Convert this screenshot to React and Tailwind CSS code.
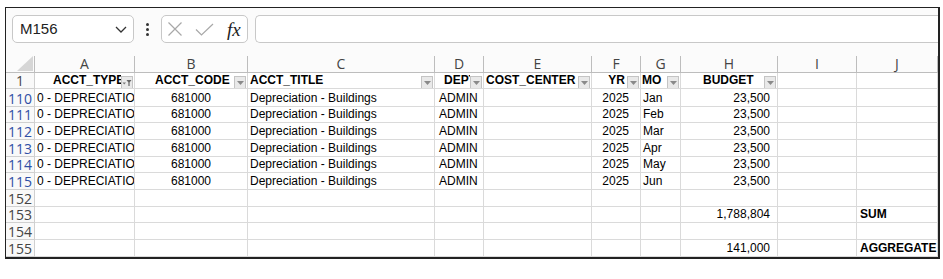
import clsx from "clsx";

const grid =
  "grid grid-cols-[29px_100px_113px_187px_49px_108px_49px_40px_97px_79px_81px]";

const months = ["Jan", "Feb", "Mar", "Apr", "May", "Jun"];

function Cell({ children, className }) {
  return (
    <div
      className={clsx(
        "border-r border-b border-[#dadada] overflow-hidden whitespace-nowrap flex items-end leading-[14px] pb-[1px]",
        className
      )}
    >
      {children}
    </div>
  );
}

function RowNum({ n, blue }) {
  return (
    <div
      className={clsx(
        "border-r border-b border-[#d0d0d0] bg-[#f9f9f9] flex items-end justify-center leading-[15px] text-[14px] font-['Open_Sans',sans-serif] overflow-hidden",
        blue ? "text-[#2f4fa5]" : "text-[#444]"
      )}
    >
      {n}
    </div>
  );
}

function FilterBtn({ funnel }) {
  return (
    <div className="w-[12px] h-[13px] shrink-0 self-start mt-[3px] bg-[#e9e9e9] border border-[#c4c4c4] flex items-center justify-center">
      {funnel ? (
        <svg width="10" height="8" viewBox="0 0 10 8">
          <path d="M0.5 3.5 L4 3.5 L2.25 5.5 Z" fill="#777" />
          <path d="M4.5 1 L9.5 1 L7.6 3.5 L7.6 7 L6.4 7 L6.4 3.5 Z" fill="#666" />
        </svg>
      ) : (
        <svg width="7" height="4" viewBox="0 0 7 4">
          <path d="M0 0 L7 0 L3.5 4 Z" fill="#8a8a8a" />
        </svg>
      )}
    </div>
  );
}

function HeadCell({ text, pad, right, funnel }) {
  return (
    <div className="border-r border-b border-[#dadada] flex items-stretch pr-[1px] overflow-hidden">
      <div
        className={clsx(
          "flex-1 min-w-0 overflow-hidden whitespace-nowrap flex items-end leading-[14px] pb-[1px] font-bold",
          right ? "justify-end pr-[2px]" : "",
          pad
        )}
      >
        {text}
      </div>
      <FilterBtn funnel={funnel} />
    </div>
  );
}

function DataRow({ n, month, h }) {
  return (
    <div className={clsx(grid, h)}>
      <RowNum n={n} blue />
      <Cell className="pl-[2px]">0 - DEPRECIATION</Cell>
      <Cell className="justify-center">681000</Cell>
      <Cell className="pl-[2px]">Depreciation - Buildings</Cell>
      <Cell className="pl-[4px]">ADMIN</Cell>
      <Cell />
      <Cell className="justify-end pr-[11px]">2025</Cell>
      <Cell className="pl-[2px]">{month}</Cell>
      <Cell className="justify-end pr-[7px]">23,500</Cell>
      <Cell />
      <Cell />
    </div>
  );
}

function EmptyRow({ n, h, amount, label }) {
  return (
    <div className={clsx(grid, h)}>
      <RowNum n={n} />
      <Cell />
      <Cell />
      <Cell />
      <Cell />
      <Cell />
      <Cell />
      <Cell />
      <Cell className="justify-end pr-[7px]">{amount}</Cell>
      <Cell />
      <Cell className="pl-[3px] font-bold">{label}</Cell>
    </div>
  );
}

export default function App() {
  const letters = ["A", "B", "C", "D", "E", "F", "G", "H", "I", "J"];
  const heights = ["h-[18px]", "h-[16px]", "h-[17px]", "h-[17px]", "h-[16px]", "h-[17px]"];

  return (
    <div className="w-[943px] h-[279px] bg-white pt-[7px] pl-[5px]">
      <div className="w-[935px] h-[252px] border-l border-t border-r-2 border-b-2 border-[#222] overflow-hidden flex flex-col bg-white">
        {/* formula bar */}
        <div className="h-[48px] shrink-0 flex items-start pt-[7px] pl-[6px] bg-[#fbfbfb]">
          <div className="w-[122px] h-[28px] rounded-[5px] border border-[#c8c8c8] bg-white flex items-center pl-[7px] pr-[6px] font-['Liberation_Sans',sans-serif] text-[15px] text-[#222]">
            <span className="flex-1">M156</span>
            <svg width="12" height="7" viewBox="0 0 12 7">
              <path d="M1 1 L6 6 L11 1" fill="none" stroke="#333" strokeWidth="1.3" />
            </svg>
          </div>
          <div className="w-[27px] h-[28px] flex flex-col items-center justify-center gap-[2px]">
            <div className="w-[3px] h-[3px] bg-[#333] rounded-full" />
            <div className="w-[3px] h-[3px] bg-[#333] rounded-full" />
            <div className="w-[3px] h-[3px] bg-[#333] rounded-full" />
          </div>
          <div className="w-[87px] h-[28px] rounded-[5px] border border-[#c8c8c8] bg-white flex items-center pl-[5px]">
            <svg width="16" height="16" viewBox="0 0 16 16">
              <path d="M1.5 1.5 L14.5 14.5 M14.5 1.5 L1.5 14.5" stroke="#a8a8a8" strokeWidth="1.2" />
            </svg>
            <svg width="19" height="13" viewBox="0 0 19 13" className="ml-[12px]">
              <path d="M1 6.5 L6.5 12 L18 1" fill="none" stroke="#a8a8a8" strokeWidth="1.2" />
            </svg>
            <span className="ml-[13px] font-['Liberation_Serif',serif] italic text-[19px] leading-none text-[#222]">
              fx
            </span>
          </div>
          <div className="flex-1 ml-[7px] h-[28px] rounded-l-[5px] border border-r-0 border-[#c8c8c8] bg-white" />
        </div>

        {/* column letters */}
        <div className={clsx(grid, "h-[17px] shrink-0 bg-[#fbfbfb] font-['Open_Sans',sans-serif] text-[14px] text-[#444]")}>
          <div className="border-r border-b border-[#bdbdbd] flex items-end justify-end pr-[1px] pb-[1px]">
            <svg width="16" height="15" viewBox="0 0 16 15">
              <path d="M16 0 L16 15 L0 15 Z" fill="#d6d6d6" />
            </svg>
          </div>
          {letters.map((l) => (
            <div key={l} className="border-r border-b border-[#bdbdbd] flex items-center justify-center leading-none">
              {l}
            </div>
          ))}
        </div>

        <div className="font-['Liberation_Sans',Arial,sans-serif] text-[12px] text-black">
          {/* table header */}
          <div className={clsx(grid, "h-[16px]")}>
            <RowNum n="1" />
            <HeadCell text="ACCT_TYPE" pad="pl-[18px]" funnel />
            <HeadCell text="ACCT_CODE" pad="pl-[20px]" />
            <HeadCell text="ACCT_TITLE" pad="pl-[2px]" />
            <HeadCell text="DEPT" pad="pl-[9px]" />
            <HeadCell text="COST_CENTER" pad="pl-[2px]" />
            <HeadCell text="YR" right />
            <HeadCell text="MO" pad="pl-[1px]" />
            <HeadCell text="BUDGET" pad="pl-[22px]" />
            <div className="border-r border-b border-[#dadada]" />
            <div className="border-r border-b border-[#dadada]" />
          </div>

          {months.map((m, i) => (
            <DataRow key={m} n={110 + i} month={m} h={heights[i]} />
          ))}
          <EmptyRow n="152" h="h-[17px]" />
          <EmptyRow n="153" h="h-[16px]" amount="1,788,804" label="SUM" />
          <EmptyRow n="154" h="h-[17px]" />
          <EmptyRow n="155" h="h-[17px]" amount="141,000" label="AGGREGATE" />
        </div>
      </div>
    </div>
  );
}
